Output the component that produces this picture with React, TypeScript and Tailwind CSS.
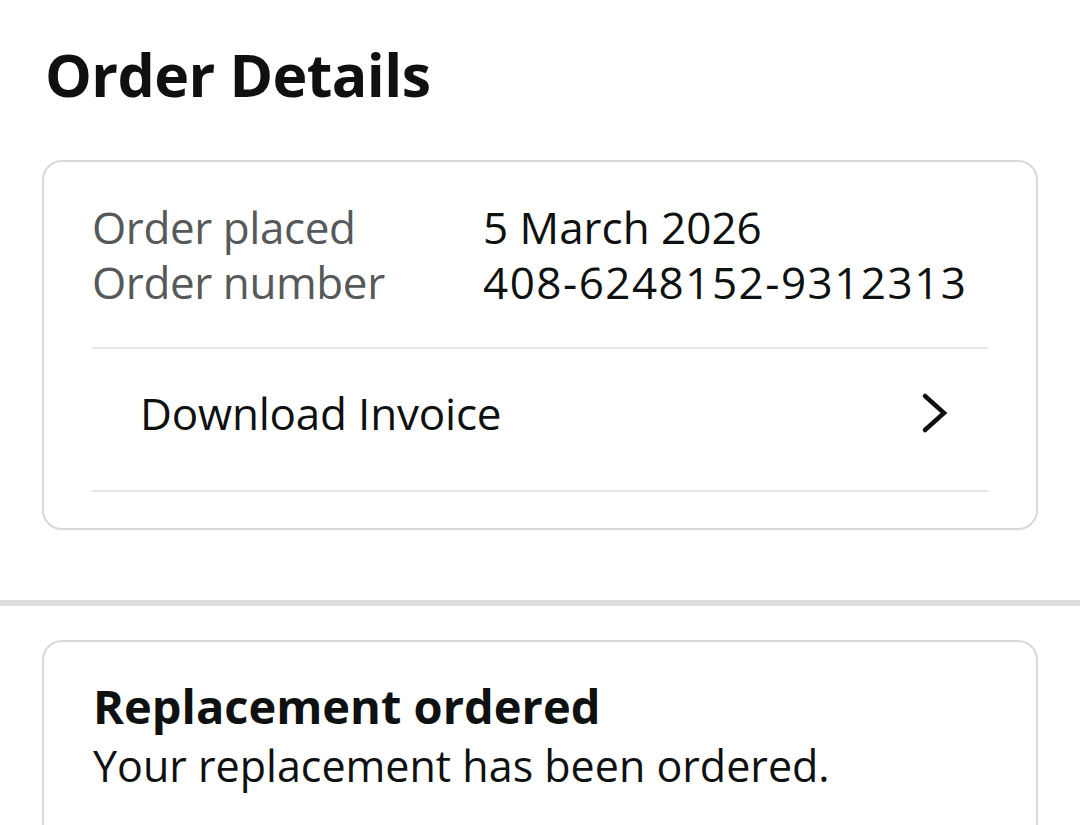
/** 订单信息里的一行：左边标签，右边值 */
function InfoRow({ label, value, wide }: { label: string; value: string; wide?: boolean }) {
    return (
        <div className="flex h-[55px] items-center">
            <span className="w-[391px] shrink-0 tracking-[-0.4px] text-[#565959]">{label}</span>
            <span className={wide ? "tracking-[1.5px] text-[#0f1111]" : "text-[#0f1111]"}>{value}</span>
        </div>
    );
}

export default function App() {
    return (
        <div
            className="min-h-[825px] w-[1080px] overflow-hidden bg-white text-[#0f1111]"
            style={{ fontFamily: '"Open Sans", "Noto Sans", sans-serif' }}
        >
            {/* 标题 */}
            <h1 className="flex h-[150px] items-center px-[45px] pb-[1px] text-[59px] font-bold leading-none tracking-[-0.6px]">
                Order Details
            </h1>

            {/* 订单卡片 */}
            <div className="mx-[42px] mt-[10px] rounded-[20px] border-2 border-[#d5d9d9] px-[48px] pt-[37px] pb-[36px] text-[44px]">
                <InfoRow label="Order placed" value="5 March 2026" />
                <InfoRow label="Order number" value="408-6248152-9312313" wide />

                <div className="mt-[38px] h-[2px] bg-[#e3e6e6]" />
                <div className="flex h-[141px] items-center justify-between pl-[48px] pr-[40px] pb-[14px]">
                    <span className="tracking-[-0.2px]">Download Invoice</span>
                    <svg width="28" height="44" viewBox="0 0 28 44" fill="none">
                        <polyline
                            points="5,5 24,22 5,39"
                            stroke="#0f1111"
                            strokeWidth="4.5"
                            strokeLinecap="round"
                            strokeLinejoin="miter"
                        />
                    </svg>
                </div>
                <div className="h-[2px] bg-[#e3e6e6]" />
            </div>

            {/* 分隔条 */}
            <div className="mt-[70px] h-[6px] bg-[#dddddd]" />

            {/* 替换订单卡片 */}
            <div className="mx-[42px] mt-[34px] rounded-t-[20px] border-2 border-b-0 border-[#d5d9d9] px-[49px] pt-[35px] pb-[60px]">
                <div className="text-[47px] font-bold leading-[58px]">Replacement ordered</div>
                <div className="text-[43px] leading-[62px]">Your replacement has been ordered.</div>
            </div>
        </div>
    );
}
